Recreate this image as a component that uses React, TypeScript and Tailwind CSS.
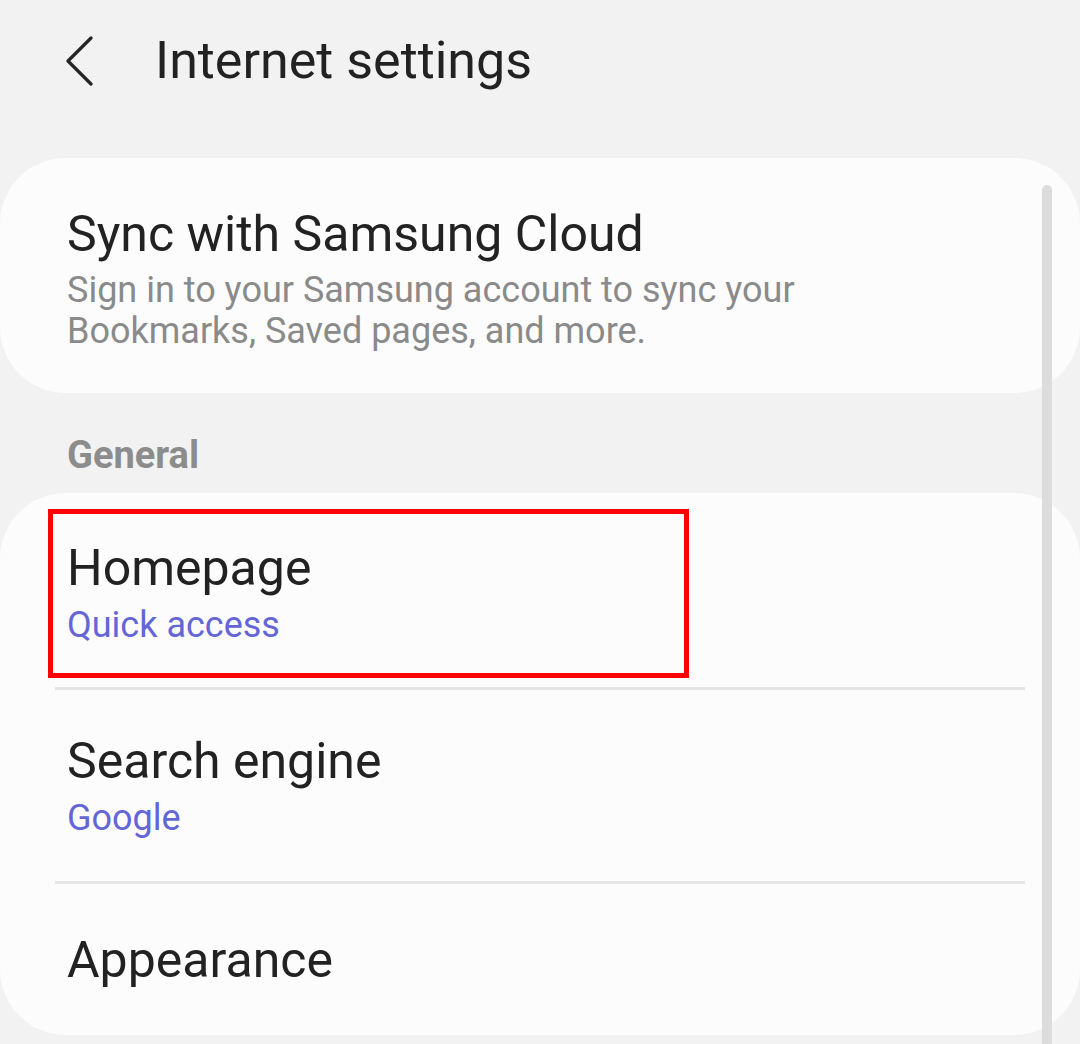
import React from "react";

const font = { fontFamily: "Roboto, 'Noto Sans', sans-serif" };

const BackIcon: React.FC = () => (
  <svg width="28" height="52" viewBox="0 0 28 52" fill="none">
    <polyline
      points="25,3 2,26 25,49"
      stroke="#252525"
      strokeWidth="3.2"
      strokeLinecap="round"
      strokeLinejoin="round"
    />
  </svg>
);

type ItemProps = { title: string; sub?: string; pt: string; pb: string };

const Item: React.FC<ItemProps> = ({ title, sub, pt, pb }) => (
  <div className={`px-[67px] ${pt} ${pb}`}>
    <div className="text-[50px] leading-[58px] text-[#222222]">{title}</div>
    {sub && (
      <div className="mt-[7px] text-[36px] leading-[42px] text-[#6466d6]">
        {sub}
      </div>
    )}
  </div>
);

const Divider: React.FC = () => (
  <div className="mx-[55px] h-[3px] bg-[#e5e5e5]" />
);

const App: React.FC = () => {
  return (
    <div
      className="relative w-[1080px] h-[1044px] overflow-hidden bg-[#f2f2f2]"
      style={font}
    >
      {/* header */}
      <div className="h-[122px] flex items-center pl-[66px]">
        <BackIcon />
        <h1 className="ml-[61px] text-[52px] leading-[60px] text-[#222222]">
          Internet settings
        </h1>
      </div>

      {/* samsung cloud card */}
      <div className="mt-[36px] rounded-[66px] bg-[#fcfcfc] px-[67px] pt-[46px] pb-[41px]">
        <div className="text-[50px] leading-[60px] text-[#222222]">
          Sync with Samsung Cloud
        </div>
        <div className="mt-[6px] text-[36px] leading-[41px] text-[#8a8a8a]">
          Sign in to your Samsung account to sync your
          <br />
          Bookmarks, Saved pages, and more.
        </div>
      </div>

      <div className="mt-[40px] px-[67px] text-[38px] leading-[44px] font-bold text-[#8c8c8c]">
        General
      </div>

      {/* general card */}
      <div className="relative mt-[16px] rounded-[66px] bg-[#fcfcfc]">
        <Item title="Homepage" sub="Quick access" pt="pt-[46px]" pb="pb-[41px]" />
        <Divider />
        <Item title="Search engine" sub="Google" pt="pt-[42px]" pb="pb-[42px]" />
        <Divider />
        <Item title="Appearance" pt="pt-[47px]" pb="pb-[46px]" />

        {/* highlight box */}
        <div className="absolute left-[48px] top-[16px] w-[641px] h-[169px] border-[5px] border-[#ff0000]" />
      </div>

      {/* scrollbar */}
      <div className="absolute left-[1042px] top-[185px] w-[10px] h-[900px] rounded-full bg-[#dcdcdc]" />
    </div>
  );
};

export default App;
